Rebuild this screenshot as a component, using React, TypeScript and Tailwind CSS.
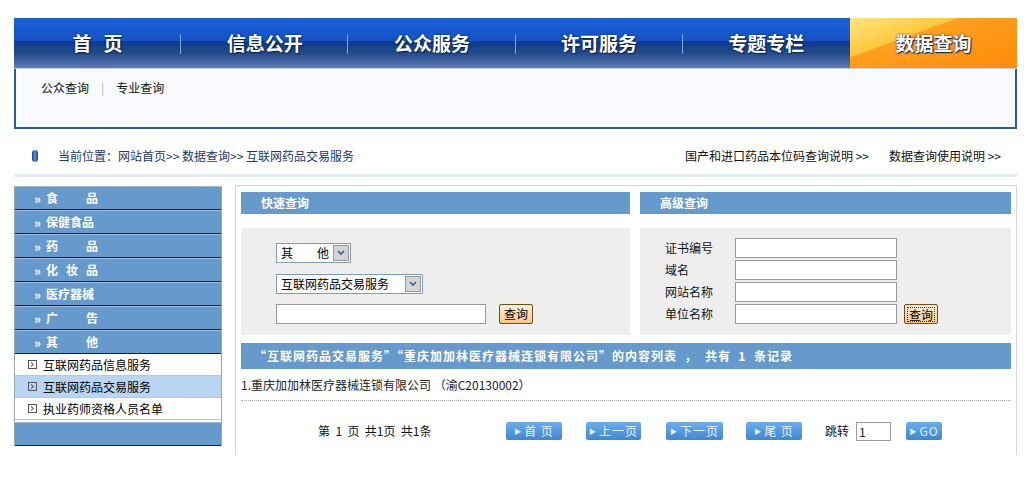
import React from "react";

const F = { fontFamily: '"Noto Sans CJK SC", "Liberation Sans", sans-serif' };

function NavItem({ label, active, sep }: { label: React.ReactNode; active?: boolean; sep?: boolean }) {
  return (
    <div className="relative flex-1 h-full flex items-center justify-center">
      {active ? (
        <div className="absolute inset-0 bg-[linear-gradient(160deg,#ffe680_0%,#ffc83c_35%,#ffa01e_36%,#ff8a0a_100%)]" />
      ) : null}
      <span className="relative text-[19px] font-bold text-white [text-shadow:1px_1px_1px_#0a2450,0_0_2px_#0a2450]">{label}</span>
      {sep ? <div className="absolute right-0 top-[16px] w-px h-[20px] bg-[#7aa8e8]" /> : null}
    </div>
  );
}

function Cat({ chars, gap }: { chars: string[]; gap: number }) {
  return (
    <div className="h-[24px] bg-[#6699cc] border-t border-t-[#9dbde0] border-b border-b-[#1e1e1e] flex items-center pl-[19px] text-white font-bold text-[12px]">
      <span className="text-[13px] mr-[5px] leading-none font-bold">»</span>
      {chars.map((c, i) => (
        <span key={i} style={{ marginLeft: i === 0 ? 0 : gap }}>{c}</span>
      ))}
    </div>
  );
}

function Sub({ label, active }: { label: string; active?: boolean }) {
  return (
    <div className={`h-[22px] flex items-center pl-[13px] text-[12px] text-black border-b border-[#b8c8d8] ${active ? "bg-[#b8d6f4]" : "bg-white"}`}>
      <span className="w-[9px] h-[9px] border border-[#555] flex items-center justify-center mr-[6px]">
        <svg width="5" height="5" viewBox="0 0 5 5"><path d="M1 0.5 L3.5 2.5 L1 4.5" stroke="#333" fill="none" strokeWidth="1" /></svg>
      </span>
      {label}
    </div>
  );
}

function FakeSelect({ children, width }: { children: React.ReactNode; width: number }) {
  return (
    <div className="h-[20px] border border-[#7f9db9] bg-white flex items-center text-[12px] text-black" style={{ width }}>
      <span className="flex-1 pl-[4px] flex">{children}</span>
      <span className="w-[16px] h-[16px] mr-[1px] bg-[#d4d4d4] border border-[#9a9a9a] flex items-center justify-center">
        <svg width="8" height="6" viewBox="0 0 8 6"><path d="M1 1 L4 4 L7 1" stroke="#3a5a9a" strokeWidth="1.6" fill="none" /></svg>
      </span>
    </div>
  );
}

function QBtn({ dotted }: { dotted?: boolean }) {
  return (
    <div className="w-[34px] h-[20px] border border-[#7a4a18] bg-[linear-gradient(to_bottom,#fff2dc,#f6c88a)] flex items-center justify-center text-[12px] text-black rounded-[2px]">
      <span className={dotted ? "border border-dotted border-[#333] px-[1px] leading-[13px]" : ""}>查询</span>
    </div>
  );
}

function PageBtn({ label, w }: { label: string; w: number }) {
  return (
    <div
      className="h-[18px] rounded-[2px] bg-[linear-gradient(to_bottom,#6aaeee,#3f87d6)] flex items-center justify-center text-[12px] text-[#e8f2ff] tracking-[1px]"
      style={{ width: w }}
    >
      <span className="text-[7px] mr-[2px]">▶</span>
      {label}
    </div>
  );
}

export default function App() {
  return (
    <div className="w-[1031px] h-[482px] bg-white text-[12px] overflow-hidden" style={F}>
      {/* header */}
      <div className="pt-[18px] pl-[14px]">
        <div className="w-[1003px]">
          <div className="h-[51px] flex bg-[linear-gradient(to_bottom,#1a5fd8_0%,#1652c6_46%,#0b3c8e_47%,#24498a_70%,#5d7db5_100%)] border-b border-[#c0d0e8]">
            <NavItem label={<><span>首</span><span className="ml-[12px]">页</span></>} sep />
            <NavItem label="信息公开" sep />
            <NavItem label="公众服务" sep />
            <NavItem label="许可服务" sep />
            <NavItem label="专题专栏" />
            <NavItem label="数据查询" active />
          </div>
          <div className="h-[60px] bg-[#f9fafd] border-x-2 border-b-2 border-[#2d5b98] pl-[25px] pt-[10px] text-[12px] text-[#111] flex items-start">
            <span>公众查询</span>
            <span className="mx-[12px] text-[#aaa]">|</span>
            <span>专业查询</span>
          </div>
        </div>
      </div>

      {/* breadcrumb */}
      <div className="ml-[14px] w-[1003px] mt-[16px]">
        <div className="h-[22px] flex items-center text-[12px]">
          <span className="ml-[18px] w-[6px] h-[12px] rounded-[3px] bg-[linear-gradient(to_right,#1b3f88,#5f8ee0,#1b3f88)]" />
          <span className="ml-[20px] text-[#1b3a6a]">当前位置：网站首页&gt;&gt; 数据查询&gt;&gt; 互联网药品交易服务</span>
          <span className="ml-auto text-[#111]">国产和进口药品本位码查询说明 &gt;&gt;</span>
          <span className="ml-[20px] mr-[16px] text-[#111]">数据查询使用说明 &gt;&gt;</span>
        </div>
        <div className="h-[3px] mt-[7px] bg-[#e4edf6]" />
      </div>

      {/* body */}
      <div className="ml-[14px] w-[1003px] mt-[8px] flex items-start">
        {/* sidebar */}
        <div className="w-[208px] border-x border-[#9aa6b2] mt-[1px]">
          <Cat chars={["食", "品"]} gap={28} />
          <Cat chars={["保", "健", "食", "品"]} gap={0} />
          <Cat chars={["药", "品"]} gap={28} />
          <Cat chars={["化", "妆", "品"]} gap={8} />
          <Cat chars={["医", "疗", "器", "械"]} gap={0} />
          <Cat chars={["广", "告"]} gap={28} />
          <Cat chars={["其", "他"]} gap={28} />
          <Sub label="互联网药品信息服务" />
          <Sub label="互联网药品交易服务" active />
          <Sub label="执业药师资格人员名单" />
          <div className="h-[24px] mt-[2px] bg-[#6699cc] border-t border-t-[#9dbde0] border-b border-b-[#1e1e1e]" />
        </div>

        {/* main */}
        <div className="ml-[13px] w-[782px] h-[270px] border-l border-t border-r border-[#d6d6d6] pl-[5px] pr-[4px] pt-[6px]">
          <div className="flex gap-[10px]">
            {/* quick */}
            <div className="w-[389px]">
              <div className="h-[22px] bg-[#6699cc] text-white font-bold text-[12px] flex items-center pl-[20px]">快速查询</div>
              <div className="h-[107px] mt-[14px] bg-[#eeeeee] pl-[35px] pt-[15px] flex flex-col">
                <FakeSelect width={75}><span>其</span><span className="ml-[24px]">他</span></FakeSelect>
                <div className="mt-[11px]"><FakeSelect width={147}>互联网药品交易服务</FakeSelect></div>
                <div className="mt-[10px] flex items-center">
                  <div className="w-[210px] h-[20px] border border-[#999] bg-white" />
                  <div className="ml-[13px]"><QBtn /></div>
                </div>
              </div>
            </div>
            {/* advanced */}
            <div className="w-[371px]">
              <div className="h-[22px] bg-[#6699cc] text-white font-bold text-[12px] flex items-center pl-[20px]">高级查询</div>
              <div className="h-[107px] mt-[14px] bg-[#eeeeee] pl-[25px] pt-[10px] flex flex-col gap-[2px] text-[12px] text-[#111]">
                {["证书编号", "域名", "网站名称", "单位名称"].map((l, i) => (
                  <div key={l} className="flex items-center h-[20px]">
                    <span className="w-[70px]">{l}</span>
                    <div className="w-[162px] h-[20px] border border-[#999] bg-white" />
                    {i === 3 ? <div className="ml-[7px]"><QBtn dotted /></div> : null}
                  </div>
                ))}
              </div>
            </div>
          </div>

          <div className="mt-[8px] w-[770px] h-[26px] bg-[#6699cc] text-white font-bold text-[12px] flex items-center pl-[13px] whitespace-pre tracking-[1px]">
            “互联网药品交易服务”“重庆加加林医疗器械连锁有限公司”的内容列表  ，  共有  1  条记录
          </div>
          <div className="w-[770px] h-[32px] pt-[1px] flex items-center text-[12px] text-[#222] border-b border-dotted border-[#aaa]">
            1.重庆加加林医疗器械连锁有限公司 （渝C20130002）
          </div>
          <div className="w-[770px] h-[60px] flex items-center text-[12px] text-[#111]">
            <span className="ml-[77px] w-[188px] whitespace-pre">第  1  页  共1页  共1条</span>
            <PageBtn label="首 页" w={56} />
            <span className="w-[24px]" />
            <PageBtn label="上一页" w={55} />
            <span className="w-[25px]" />
            <PageBtn label="下一页" w={57} />
            <span className="w-[23px]" />
            <PageBtn label="尾 页" w={56} />
            <span className="ml-[23px]">跳转</span>
            <div className="ml-[7px] w-[35px] h-[19px] border border-[#999] bg-white text-[12px] pl-[2px] leading-[17px]">1</div>
            <div className="ml-[15px]"><PageBtn label="GO" w={36} /></div>
          </div>
        </div>
      </div>
    </div>
  );
}
